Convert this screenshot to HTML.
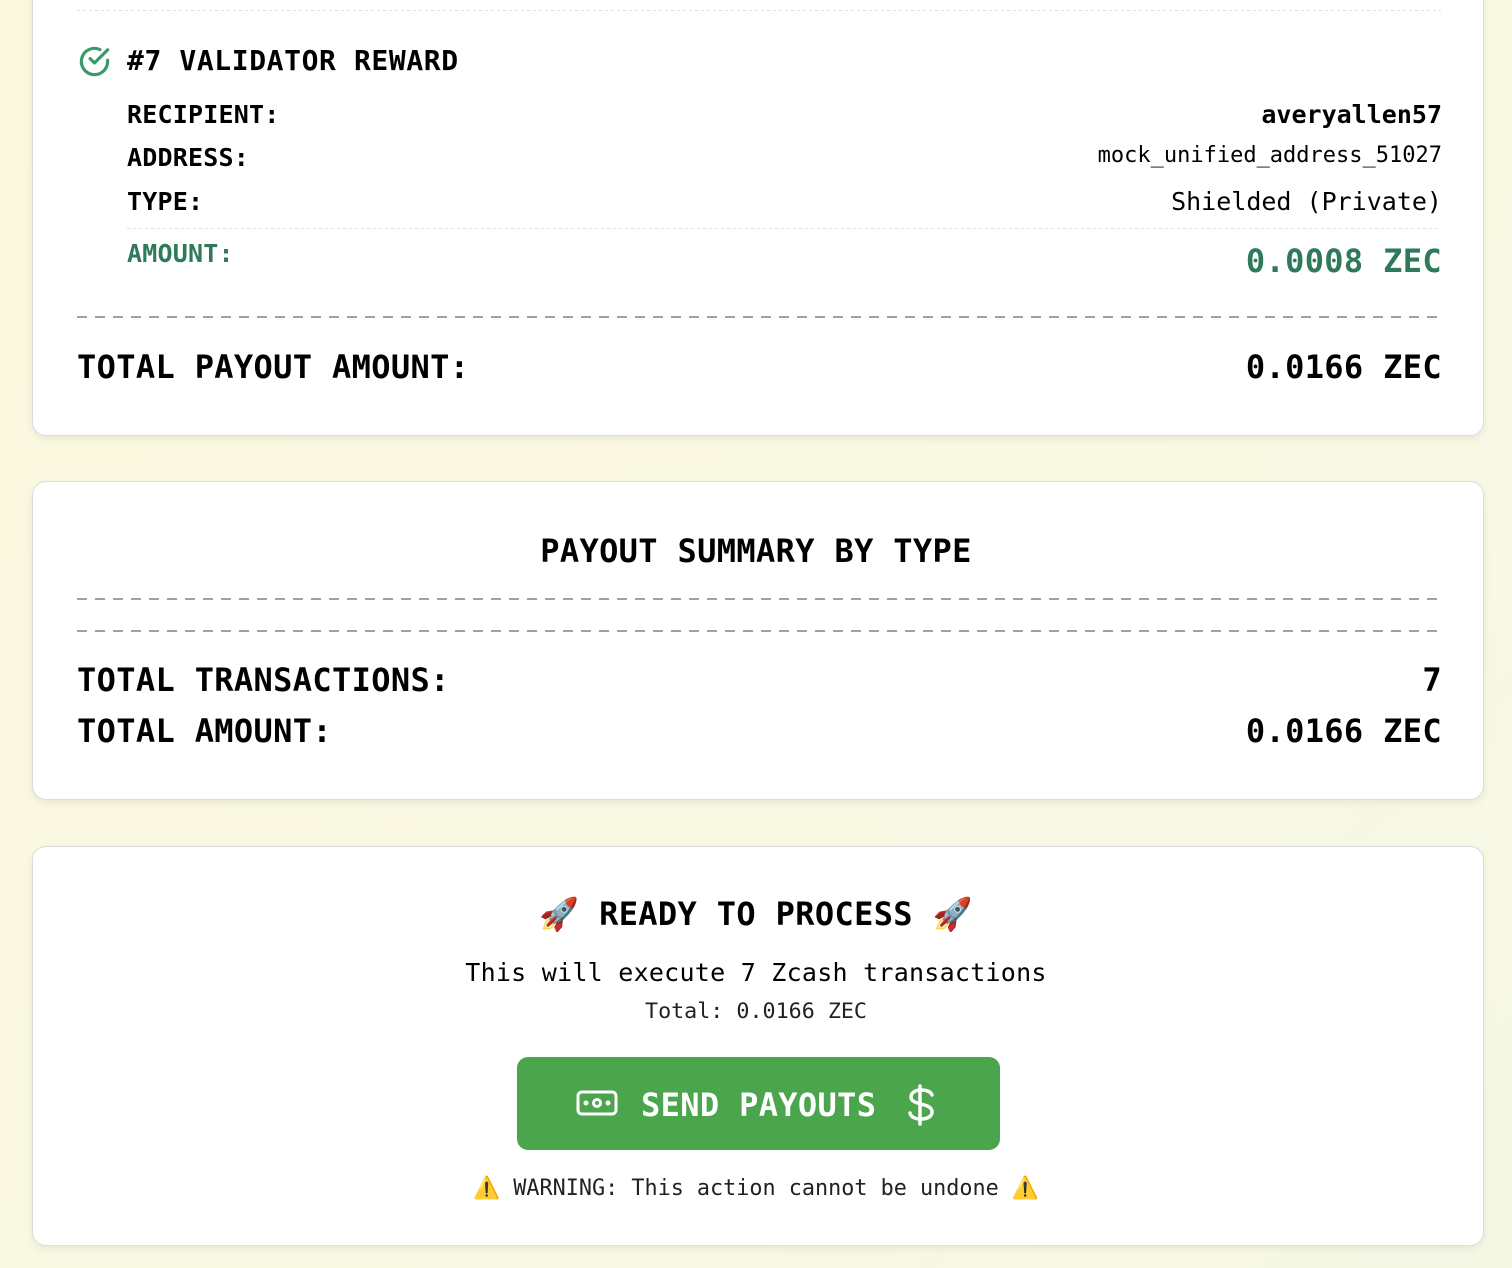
<!DOCTYPE html>
<html><head><meta charset="utf-8"><style>
*{margin:0;padding:0;box-sizing:border-box}
html,body{width:1512px;height:1268px;overflow:hidden}
body{background:linear-gradient(135deg,#fcf8df,#f6f8e6);font-family:"DejaVu Sans Mono","Liberation Mono",monospace;color:#000;position:relative}
.card{position:absolute;left:32px;width:1452px;background:#fff;border:1px solid #dcdce0;border-radius:14px;box-shadow:0 3px 8px rgba(0,0,0,0.07)}
.t{position:absolute;line-height:1;white-space:nowrap}
.r{right:70px;text-align:right}
.b{font-weight:bold}
.big{font-size:32px;letter-spacing:0.35px}
.dash{position:absolute;left:77px;width:1364px;height:2px;background:repeating-linear-gradient(90deg,#a09eae 0 10px,transparent 10px 18px)}
.dot{position:absolute;height:1px;background:repeating-linear-gradient(90deg,#dedede 0 3px,transparent 3px 6px)}
.g{color:#2f7a5a}
</style></head><body>
<div class="card" style="top:-20px;height:456px"></div>
<div class="dot" style="left:77px;width:1364px;top:10px"></div>
<svg style="position:absolute;left:77px;top:44px" width="35" height="35" viewBox="0 0 24 24" fill="none" stroke="#3a9a6a" stroke-width="2.2" stroke-linecap="round" stroke-linejoin="round"><path d="M21 11.1V12a9 9 0 1 1-5.3-8.2"/><path d="M21 4 12 13l-3-3"/></svg>
<div class="t b" style="left:127px;top:47px;font-size:28px;letter-spacing:0.6px">#7 VALIDATOR REWARD</div>
<div class="t b" style="left:127px;top:102px;font-size:25px;letter-spacing:0.2px">RECIPIENT:</div>
<div class="t b" style="left:127px;top:145px;font-size:25px;letter-spacing:0.2px">ADDRESS:</div>
<div class="t b" style="left:127px;top:189px;font-size:25px;letter-spacing:0.2px">TYPE:</div>
<div class="t b g" style="left:127px;top:241px;font-size:25px;letter-spacing:0.2px">AMOUNT:</div>
<div class="t b r" style="top:102px;font-size:25px">averyallen57</div>
<div class="t r" style="top:145px;font-size:22px">mock_unified_address_51027</div>
<div class="t r" style="top:189px;font-size:25px">Shielded (Private)</div>
<div class="dot" style="left:127px;width:1314px;top:228px"></div>
<div class="t b r g big" style="top:245px">0.0008 ZEC</div>
<div class="dash" style="top:316px"></div>
<div class="t b big" style="left:77px;top:351px">TOTAL PAYOUT AMOUNT:</div>
<div class="t b r big" style="top:351px">0.0166 ZEC</div>

<div class="card" style="top:481px;height:319px"></div>
<div class="t b big" style="left:0;width:1512px;text-align:center;top:535px">PAYOUT SUMMARY BY TYPE</div>
<div class="dash" style="top:598px"></div>
<div class="dash" style="top:630px"></div>
<div class="t b big" style="left:77px;top:664px">TOTAL TRANSACTIONS:</div>
<div class="t b r big" style="top:664px">7</div>
<div class="t b big" style="left:77px;top:715px">TOTAL AMOUNT:</div>
<div class="t b r big" style="top:715px">0.0166 ZEC</div>

<div class="card" style="top:846px;height:400px"></div>
<div class="t b big" style="left:0;width:1512px;text-align:center;top:898px">🚀 READY TO PROCESS 🚀</div>
<div class="t" style="left:0;width:1512px;text-align:center;top:960px;font-size:25px;letter-spacing:0.25px">This will execute 7 Zcash transactions</div>
<div class="t" style="left:0;width:1512px;text-align:center;top:1001px;font-size:21.7px;color:#222">Total: 0.0166 ZEC</div>
<div style="position:absolute;left:517px;top:1057px;width:483px;height:93px;background:#4aa54c;border-radius:11px"></div>
<svg style="position:absolute;left:576px;top:1090px" width="42" height="26" viewBox="0 0 42 26" fill="none" stroke="#fff" stroke-width="3"><rect x="2" y="2" width="38" height="22" rx="4"/><circle cx="21" cy="13" r="3.5"/><circle cx="10" cy="13" r="1" fill="#fff"/><circle cx="32" cy="13" r="1" fill="#fff"/></svg>
<div class="t b big" style="left:641px;top:1089px;color:#fff">SEND PAYOUTS</div>
<svg style="position:absolute;left:902px;top:1083px" width="36" height="44" viewBox="0 0 36 44" fill="none" stroke="#fff" stroke-width="3.5" stroke-linecap="round"><path d="M18 3v38"/><path d="M30 12c-1-3-5-5-11-5-6 0-10 3-10 7 0 9 21 5 21 15 0 4-4 7-11 7-6 0-10-2-11-6"/></svg>
<div class="t" style="left:0;width:1512px;text-align:center;top:1178px;font-size:21.8px;color:#222">⚠️ WARNING: This action cannot be undone ⚠️</div>
</body></html>
